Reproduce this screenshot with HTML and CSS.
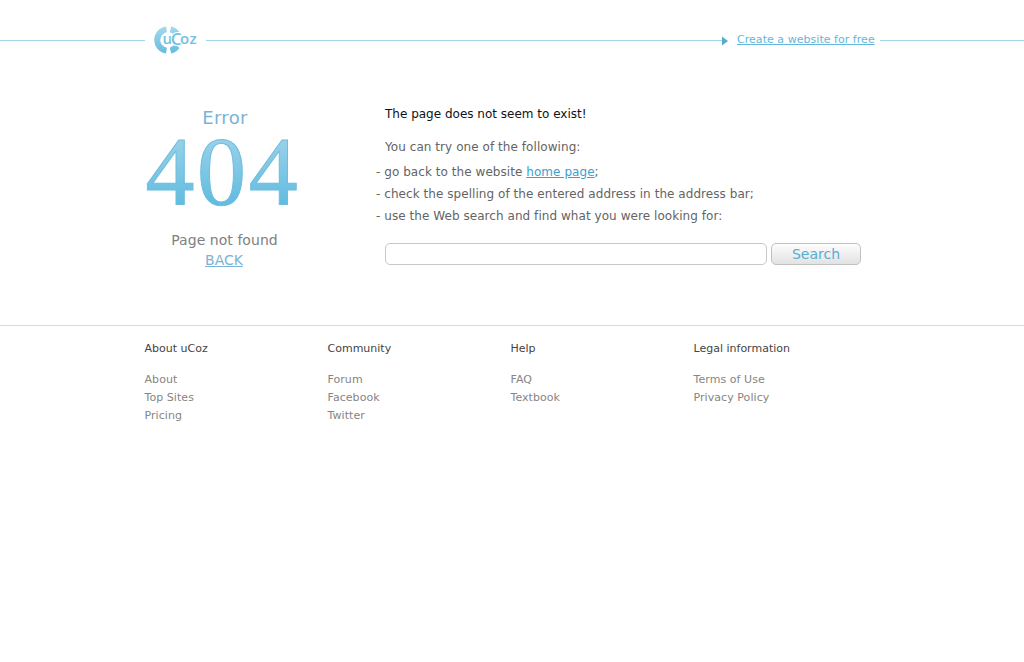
FILE: index.html
```
<!DOCTYPE html>
<html lang="en">
<head>
<meta charset="utf-8">
<title>Error 404</title>
<link rel="stylesheet" href="styles.css">
</head>
<body>
<header class="top">
  <span class="rule rule-left"></span>
  <a class="logo" href="#" aria-label="uCoz">
    <svg width="61" height="30" viewBox="0 0 61 30">
      <defs>
        <linearGradient id="ring" gradientUnits="userSpaceOnUse" x1="0" y1="1" x2="0" y2="29">
          <stop offset="0" stop-color="#a3d8ec"/><stop offset="1" stop-color="#62bbde"/>
        </linearGradient>
      </defs>
      <g fill="none" stroke="url(#ring)" stroke-width="6">
        <path d="M21.5 3.4A10.7 10.7 0 0 0 21.5 24.6"/>
        <path d="M25.5 3.4A10.7 10.7 0 0 1 32 8"/>
        <path d="M25.5 24.6A10.7 10.7 0 0 0 32 20"/>
      </g>
      <text class="logo-text" y="18"><tspan x="17.5">u</tspan><tspan class="logo-c" x="25.8" dy="1">C</tspan><tspan x="35" dy="-1">o</tspan><tspan x="44.5">z</tspan></text>
    </svg>
  </a>
  <span class="rule rule-mid"></span>
  <svg class="arrow" width="6" height="10" viewBox="0 0 6 10"><path d="M0 .5L6 5L0 9.5z"/></svg>
  <a class="create" href="#">Create a website for free</a>
  <span class="rule rule-right"></span>
</header>

<main class="main">
  <section class="error">
    <h1 class="error-title">Error</h1>
    <svg class="code" width="160" height="72" viewBox="0 0 160 72">
      <defs>
        <linearGradient id="digits" gradientUnits="userSpaceOnUse" x1="0" y1="3" x2="0" y2="69">
          <stop offset="0" stop-color="#98d1e9"/><stop offset="1" stop-color="#60bce0"/>
        </linearGradient>
      </defs>
      <text class="digits" y="68" x="2.5 54 105.7">404</text>
    </svg>
    <p class="missing">Page not found</p>
    <a class="back" href="#">BACK</a>
  </section>
  <section class="help">
    <p class="lead">The page does not seem to exist!</p>
    <p class="intro">You can try one of the following:</p>
    <ul class="tips">
      <li>- go back to the website <a href="#">home page</a>;</li>
      <li>- check the spelling of the entered address in the address bar;</li>
      <li>- use the Web search and find what you were looking for:</li>
    </ul>
    <form class="search">
      <input class="query" type="text" aria-label="Search">
      <button class="submit" type="button">Search</button>
    </form>
  </section>
</main>

<footer class="footer">
  <div class="col"><h2>About uCoz</h2><a href="#">About</a><a href="#">Top Sites</a><a href="#">Pricing</a></div>
  <div class="col"><h2>Community</h2><a href="#">Forum</a><a href="#">Facebook</a><a href="#">Twitter</a></div>
  <div class="col"><h2>Help</h2><a href="#">FAQ</a><a href="#">Textbook</a></div>
  <div class="col"><h2>Legal information</h2><a href="#">Terms of Use</a><a href="#">Privacy Policy</a></div>
</footer>
</body>
</html>
```
FILE: styles.css
```
* { box-sizing: border-box; }
body { margin: 0; background: #fff; color: #646464; font-family: Verdana, "DejaVu Sans", sans-serif; font-size: 12px; }
p, h1, h2, ul { margin: 0; padding: 0; font-weight: normal; }
.top { display: flex; height: 81px; align-items: center; }
.rule { height: 1px; background: #a0d8e8; }
.rule-left { width: 145px; }
.logo { display: block; width: 61px; height: 30px; }
.logo-text { font-family: "Open Sans", sans-serif; font-size: 15px; font-weight: 600; fill: #74c1df; stroke: #fff; stroke-width: 2px; paint-order: stroke; }
.logo-c { font-size: 17px; }
.rule-mid { width: 516px; }
.arrow { fill: #55acd0; }
.create { width: 152px; padding-left: 9px; color: #63b7db; font-size: 11px; line-height: 16px; letter-spacing: .04px; margin-top: -2px; white-space: nowrap; }
.rule-right { flex: 1; }
.main { display: flex; height: 244px; padding: 24px 0 0 144px; }
.error { display: flex; flex-direction: column; align-items: center; width: 160px; margin-right: 72px; }
.error-title { height: 26px; padding-left: 2px; font-size: 18px; line-height: 26px; letter-spacing: .3px; color: #7bb3d5; }
.code { display: block; margin-top: 5px; margin-left: -2px; overflow: visible; }
.digits { font-family: "Liberation Serif", serif; font-size: 98px; fill: url(#digits); stroke: #70bddc; stroke-width: 1px; }
.missing { margin-top: 22px; padding-left: 1px; font-size: 14px; line-height: 20px; letter-spacing: .05px; color: #808080; }
.back { color: #7bb3d5; font-size: 14px; line-height: 20px; }
.help { width: 500px; }
.lead { padding-left: 9px; line-height: 18px; color: #111; }
.intro { padding: 15px 0 0 9px; line-height: 18px; letter-spacing: .06px; }
.tips { list-style: none; padding-top: 5px; line-height: 22px; letter-spacing: .055px; white-space: nowrap; }
.tips a { color: #3ba0ce; }
.search { display: flex; gap: 4px; padding: 16px 0 0 9px; }
.query { width: 382px; height: 22px; border: 1px solid #c8c8c8; border-radius: 5px; background: #fff; }
.submit { width: 90px; height: 22px; padding: 0; border: 1px solid #c1c1c1; border-radius: 5px; background: linear-gradient(#fdfdfd, #e2e2e2); color: #58add2; font: 14px/19px Verdana, "DejaVu Sans", sans-serif; }
.footer { display: flex; padding: 14px 0 0 144.5px; border-top: 1px solid #dadada; font-size: 11px; line-height: 18px; }
.col { display: flex; flex-direction: column; width: 183px; }
.col h2 { margin-bottom: 13px; font-size: 11px; line-height: 18px; color: #444; }
.col a { color: #858585; letter-spacing: .06px; text-decoration: none; }
```
